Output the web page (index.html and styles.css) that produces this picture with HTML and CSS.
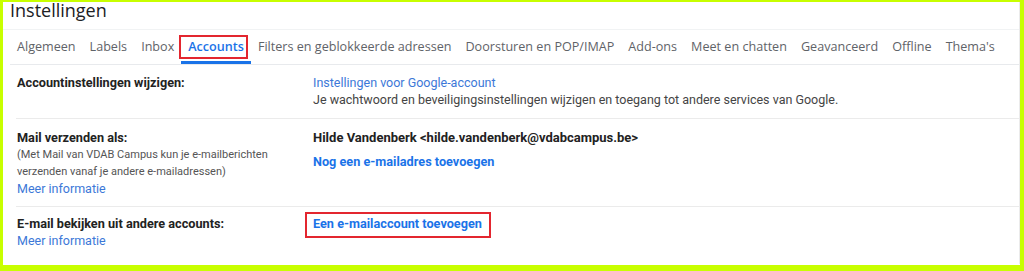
FILE: index.html
```html
<!DOCTYPE html>
<html lang="nl">

<head>
    <meta charset="UTF-8">
    <meta name="viewport" content="width=device-width, initial-scale=1.0">
    <title>Instellingen</title>
    <link rel="stylesheet" href="styles.css">
</head>

<body>

    <div class="frame">
        <div class="panel">
            <h1 class="title">Instellingen</h1>

            <!-- tabbladen -->
            <nav class="tabs">
                <span class="tab">Algemeen</span>
                <span class="tab">Labels</span>
                <span class="tab">Inbox</span>
                <span class="tab active"><span class="marked">Accounts</span></span>
                <span class="tab">Filters en geblokkeerde adressen</span>
                <span class="tab">Doorsturen en POP/IMAP</span>
                <span class="tab">Add-ons</span>
                <span class="tab">Meet en chatten</span>
                <span class="tab">Geavanceerd</span>
                <span class="tab">Offline</span>
                <span class="tab">Thema's</span>
            </nav>

            <!-- instellingen -->
            <div class="rows">
                <div class="row first">
                    <div class="label">Accountinstellingen wijzigen:</div>
                    <div class="value">
                        <a class="link">Instellingen voor Google-account</a><br>
                        Je wachtwoord en beveiligingsinstellingen wijzigen en toegang tot andere services van Google.
                    </div>
                </div>

                <div class="row second">
                    <div class="label">
                        Mail verzenden als:
                        <p class="hint">(Met Mail van VDAB Campus kun je e-mailberichten<br>verzenden vanaf je andere e-mailadressen)</p>
                        <a class="link normal">Meer informatie</a>
                    </div>
                    <div class="value">
                        <b>Hilde Vandenberk &lt;hilde.vandenberk@vdabcampus.be&gt;</b>
                        <p class="add"><a class="link">Nog een e-mailadres toevoegen</a></p>
                    </div>
                </div>

                <div class="row third">
                    <div class="label">
                        E-mail bekijken uit andere accounts:<br>
                        <a class="link normal">Meer informatie</a>
                    </div>
                    <div class="value">
                        <a class="link marked boxed">Een e-mailaccount toevoegen</a>
                    </div>
                </div>
            </div>
        </div>
    </div>

</body>

</html>
```

FILE: styles.css
```css
* {
    margin: 0;
    padding: 0;
    box-sizing: border-box;
}

body {
    background: #c8ff00;
    font-family: Roboto, "Liberation Sans", Arial, sans-serif;
    font-size: 13px;
    color: #222;
}

.frame {
    width: 1024px;
    height: 271px;
    border-style: solid;
    border-color: #c8ff00;
    border-width: 2px 4px 6px 3px;
    background: white;
    overflow: hidden;
}

.panel {
    height: 100%;
    border-right: 1px solid #ebebeb;
}

.title {
    font-family: "Open Sans", sans-serif;
    font-size: 18px;
    font-weight: 400;
    line-height: 19px;
    color: #202124;
    margin-top: -1px;
    padding: 0 0 9px 7px;
    border-bottom: 1px solid #f1f3f4;
}

/* tabbladen */
.tabs {
    display: flex;
    height: 35px;
    margin-left: 7px;
    border-bottom: 1px solid #e8eaed;
}

.tab {
    font-family: "Open Sans", sans-serif;
    font-size: 12.6px;
    color: #5f6368;
    padding: 0 7px;
    line-height: 34px;
    white-space: nowrap;
    border-bottom: 3px solid transparent;
}

.tab.active {
    color: #1a73e8;
    font-weight: 600;
    border-bottom-color: #1a73e8;
}

.marked {
    position: relative;
}

.marked::after {
    content: "";
    position: absolute;
    left: -9px;
    right: -4px;
    top: -3px;
    bottom: -4px;
    border: 2px solid #e3262f;
}

/* rijen */
.rows {
    margin-left: 13px;
}

.row {
    display: grid;
    grid-template-columns: 296px 1fr;
    padding-left: 1px;
    line-height: 17px;
    border-bottom: 1px solid #ebebeb;
}

.row.first {
    padding-top: 9px;
    padding-bottom: 10px;
}

.row.second {
    padding-top: 10px;
    padding-bottom: 9px;
}

.row.third {
    padding-top: 8px;
    border-bottom: none;
}

.label {
    font-weight: bold;
    font-size: 12.7px;
}

.value {
    color: #444;
    font-size: 12.5px;
}

.value b {
    color: #222;
    font-size: 13px;
}

.hint {
    font-size: 11px;
    font-weight: normal;
    color: #555;
}

.link {
    color: #1a73e8;
    cursor: pointer;
}

.value .link {
    font-weight: bold;
    font-size: 12.7px;
}

.row.first .link,
.link.normal {
    font-weight: normal;
    font-size: 12.5px;
    color: #3c78d8;
}

.add {
    margin-top: 7px;
}

.boxed {
    display: inline-block;
}

.boxed::after {
    left: -8px;
    right: -9px;
    top: -3px;
    bottom: -6px;
}
```
